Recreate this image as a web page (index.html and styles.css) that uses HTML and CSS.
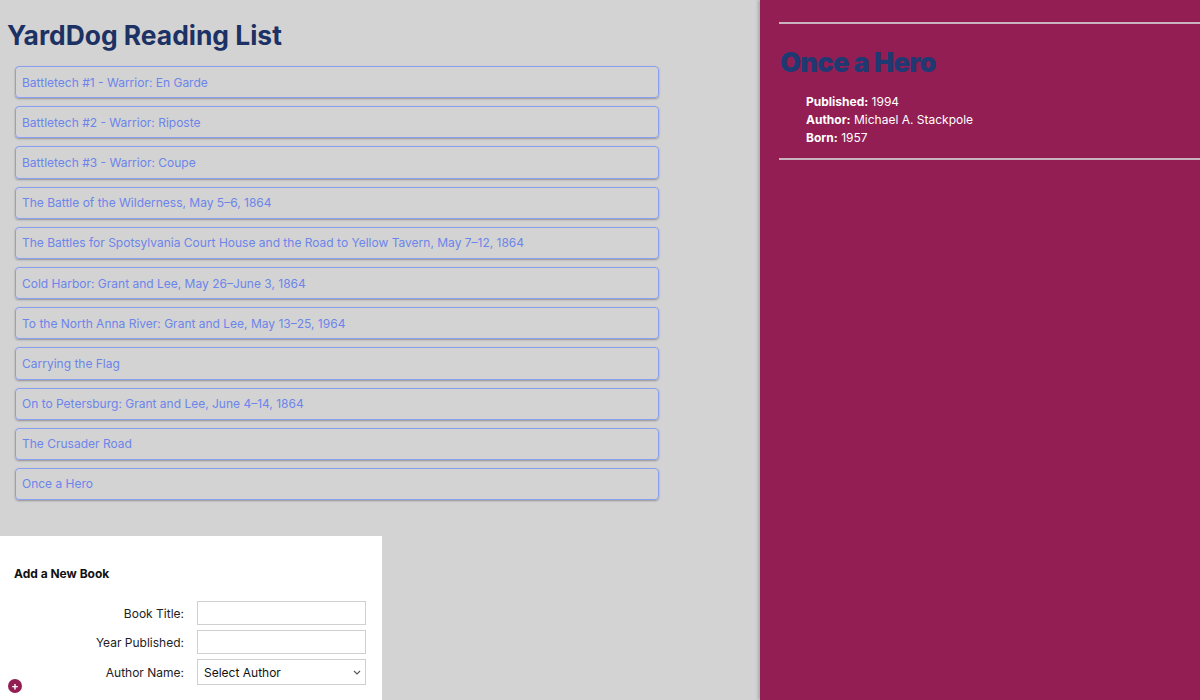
FILE: index.html
```html
<!DOCTYPE html>
<html lang="en">
<head>
<meta charset="utf-8">
<title>YardDog Reading List</title>
<link rel="stylesheet" href="styles.css">
</head>
<body>
<div class="app">
  <main class="main">
    <h1 class="title">YardDog Reading List</h1>
    <ul class="book-list">
      <li class="book">Battletech #1 - Warrior: En Garde</li>
      <li class="book">Battletech #2 - Warrior: Riposte</li>
      <li class="book">Battletech #3 - Warrior: Coupe</li>
      <li class="book">The Battle of the Wilderness, May 5–6, 1864</li>
      <li class="book">The Battles for Spotsylvania Court House and the Road to Yellow Tavern, May 7–12, 1864</li>
      <li class="book">Cold Harbor: Grant and Lee, May 26–June 3, 1864</li>
      <li class="book">To the North Anna River: Grant and Lee, May 13–25, 1964</li>
      <li class="book">Carrying the Flag</li>
      <li class="book">On to Petersburg: Grant and Lee, June 4–14, 1864</li>
      <li class="book">The Crusader Road</li>
      <li class="book">Once a Hero</li>
    </ul>
    <form class="add-form">
      <h2 class="form-title">Add a New Book</h2>
      <div class="field">
        <label class="field-label">Book Title:</label>
        <input class="field-input" type="text">
      </div>
      <div class="field">
        <label class="field-label">Year Published:</label>
        <input class="field-input" type="text">
      </div>
      <div class="field">
        <label class="field-label">Author Name:</label>
        <span class="select-wrap">
          <select class="field-input field-select">
            <option>Select Author</option>
          </select>
          <svg class="chevron" width="8" height="5" viewBox="0 0 8 5"><path d="M1 1 L4 4 L7 1" fill="none" stroke="#555" stroke-width="1.1"/></svg>
        </span>
      </div>
    </form>
  </main>
  <aside class="details">
    <hr class="rule">
    <h1 class="detail-title">Once a Hero</h1>
    <ul class="detail-list">
      <li><strong>Published:</strong> 1994</li>
      <li><strong>Author:</strong> Michael A. Stackpole</li>
      <li><strong>Born:</strong> 1957</li>
    </ul>
    <hr class="rule">
  </aside>
</div>
<button class="add-btn" type="button">+</button>
</body>
</html>
```

FILE: styles.css
```css
* { box-sizing: border-box; }
html, body { margin: 0; padding: 0; }
body {
  font-family: Inter, "Noto Sans", sans-serif;
  background: #d3d3d3;
  overflow: hidden;
}
.app {
  display: grid;
  grid-template-columns: 760px 440px;
  height: 700px;
}
.main {
  background: #d3d3d3;
  padding: 18px 0 0 0;
  overflow: hidden;
}
.title {
  margin: 0 0 0 7px;
  font-size: 26.4px;
  font-weight: 700;
  line-height: 34px;
  color: #1c3164;
}
.book-list {
  list-style: none;
  margin: 14px 0 0 15px;
  padding: 0;
  width: 644px;
  display: flex;
  flex-direction: column;
  gap: 8px;
}
.book {
  height: 32.2px;
  border: 1px solid #8b9ff2;
  border-radius: 4px;
  box-shadow: 0 1px 2px rgba(0,0,0,0.3);
  padding: 0 6px;
  display: flex;
  align-items: center;
  font-size: 12px;
  color: #6c85ea;
}
.add-form {
  margin-top: 36px;
  width: 382px;
  background: #fff;
  padding: 30px 14px 20px;
  height: 200px;
}
.form-title {
  margin: 0 0 20px;
  font-size: 12px;
  font-weight: 700;
  color: #111;
}
.field {
  display: grid;
  grid-template-columns: 170px 169px;
  column-gap: 13px;
  align-items: center;
  margin-bottom: 5px;
}
.field-label {
  text-align: right;
  font-size: 12px;
  color: #222;
}
.field-input {
  height: 24px;
  width: 169px;
  border: 1px solid #d0d0d0;
  background: #fff;
  font-family: Inter, sans-serif;
  font-size: 12px;
  margin: 0;
}
.select-wrap {
  position: relative;
  display: block;
  width: 169px;
  height: 26px;
}
.field-select {
  display: block;
  height: 26px;
  padding: 0 4px 0 6px;
  color: #111;
  appearance: none;
  -webkit-appearance: none;
  border-radius: 0;
}
.chevron {
  position: absolute;
  right: 5px;
  top: 11px;
  pointer-events: none;
}
.details {
  background: #921e53;
  padding: 22px 0 0 19px;
  box-shadow: -2px 0 3px rgba(0,0,0,0.2);
  color: #fff;
}
.rule {
  margin: 0;
  border: 0;
  height: 2px;
  background: #c9b3bf;
}
.detail-title {
  margin: 22px 0 0 1px;
  font-size: 27px;
  line-height: 34px;
  font-weight: 900;
  letter-spacing: -0.6px;
  color: #1f3a72;
}
.detail-list {
  list-style: none;
  margin: 13px 0 11px;
  padding: 0 0 0 27px;
  font-size: 12px;
  line-height: 18px;
}
.add-btn {
  position: fixed;
  left: 8px;
  top: 679px;
  width: 14px;
  height: 14px;
  border-radius: 50%;
  border: 0;
  padding: 0;
  background: #921e53;
  color: #fff;
  font-size: 11px;
  line-height: 14px;
  font-weight: 700;
  font-family: Inter, sans-serif;
}
```
